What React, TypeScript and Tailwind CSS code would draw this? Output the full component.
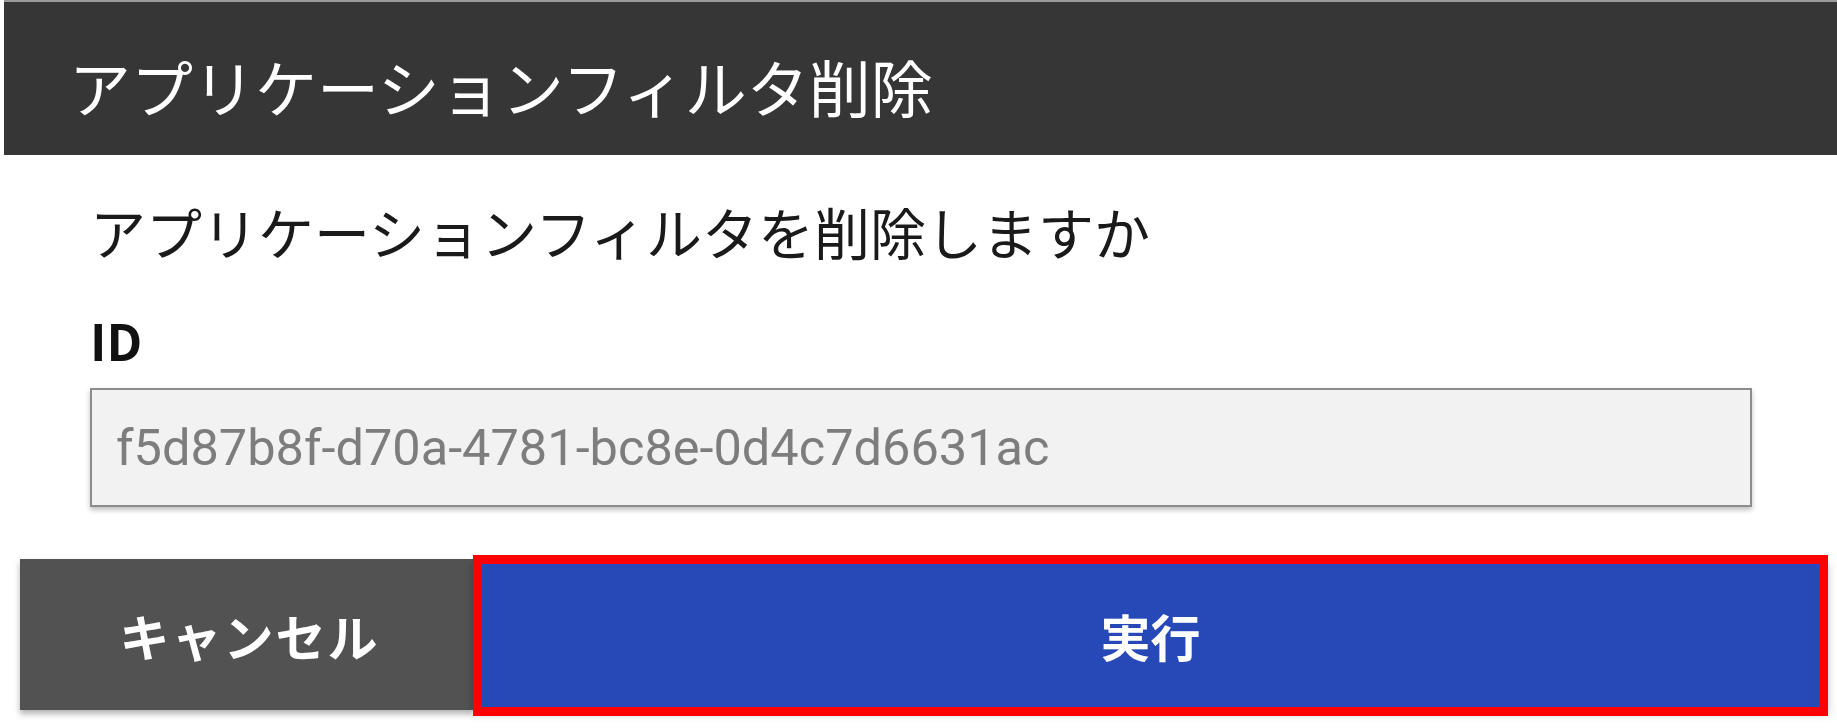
import React from 'react';

const jp = { fontFamily: '"Noto Sans CJK JP", "Noto Sans", sans-serif' };
const latin = { fontFamily: 'Roboto, "Noto Sans CJK JP", sans-serif' };

export default function App() {
  const filterId = 'f5d87b8f-d70a-4781-bc8e-0d4c7d6631ac';

  return (
    <div className="w-[1837px] h-[728px] bg-white overflow-hidden" style={jp}>
      <header className="ml-[4px] h-[155px] bg-[#363636] border-t-2 border-[#9a9a9a] flex items-center pl-[65px] pt-[15px]">
        <h1 className="text-[62px] leading-none font-normal text-white">アプリケーションフィルタ削除</h1>
      </header>

      <div className="pl-[90px] pr-[85px]">
        <p className="mt-[48px] text-[56px] leading-none font-normal text-[#1a1a1a]">
          アプリケーションフィルタを削除しますか
        </p>
        <p className="mt-[55px] text-[50px] leading-none font-bold text-[#111]">ID</p>
        <div className="mt-[24px] h-[119px] bg-[#f2f2f2] border-2 border-[#8c8c8c] shadow-[0_3px_5px_rgba(0,0,0,0.25)] flex items-center pl-[24px] pt-[1px]">
          <span className="text-[50.5px] leading-none text-[#7d7d7d]" style={latin}>
            {filterId}
          </span>
        </div>
      </div>

      <div className="mt-[52px] ml-[20px] w-[1808px] h-[151px] flex">
        <button className="w-[453px] h-full bg-[#525252] text-white text-[50px] font-bold tracking-[2px] leading-none shadow-[0_4px_6px_rgba(0,0,0,0.3)] flex items-center justify-center pl-[6px]">
          キャンセル
        </button>
        <div className="relative flex-1">
          <button className="w-full h-full bg-[#2749b8] text-white text-[50px] font-bold leading-none shadow-[0_4px_8px_rgba(0,0,0,0.25)] flex items-center justify-center">
            実行
          </button>
          {/* highlight frame drawn over the button */}
          <div className="absolute left-0 right-0 top-[-4px] bottom-[-6px] border-[9px] border-[#ff0000] pointer-events-none" />
        </div>
      </div>
    </div>
  );
}
